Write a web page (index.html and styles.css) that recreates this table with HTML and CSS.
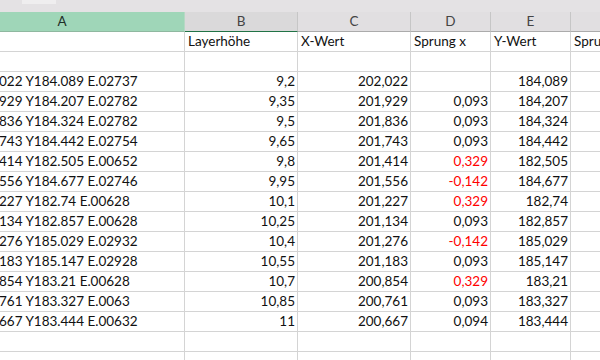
FILE: index.html
```html
<!DOCTYPE html>
<html lang="de">
<head>
    <meta charset="UTF-8">
    <title>Tabelle</title>
    <link rel="stylesheet" href="styles.css">
</head>
<body>
    <div class="sheet">
        <div class="topbar"><span class="topbar-patch"></span></div>

        <div class="row head">
            <div class="cell col-a sel">A</div>
            <div class="cell col-b near">B</div>
            <div class="cell col-c">C</div>
            <div class="cell col-d">D</div>
            <div class="cell col-e">E</div>
            <div class="cell col-f"></div>
        </div>

        <div class="row">
            <div class="cell col-a"></div>
            <div class="cell col-b">Layerhöhe</div>
            <div class="cell col-c">X-Wert</div>
            <div class="cell col-d">Sprung x</div>
            <div class="cell col-e">Y-Wert</div>
            <div class="cell col-f">Sprung y</div>
        </div>

        <div class="row">
            <div class="cell col-a"></div>
            <div class="cell col-b"></div>
            <div class="cell col-c"></div>
            <div class="cell col-d"></div>
            <div class="cell col-e"></div>
            <div class="cell col-f"></div>
        </div>

        <div id="rows"></div>

        <div class="row">
            <div class="cell col-a"></div>
            <div class="cell col-b"></div>
            <div class="cell col-c"></div>
            <div class="cell col-d"></div>
            <div class="cell col-e"></div>
            <div class="cell col-f"></div>
        </div>
        <div class="row">
            <div class="cell col-a"></div>
            <div class="cell col-b"></div>
            <div class="cell col-c"></div>
            <div class="cell col-d"></div>
            <div class="cell col-e"></div>
            <div class="cell col-f"></div>
        </div>
    </div>

    <script>
        // gcode fragment, Layerhöhe, X, Sprung x, Y, Sprung x rot?
        const data = [
            ['022 Y184.089 E.02737', '9,2', '202,022', '', '184,089', false],
            ['929 Y184.207 E.02782', '9,35', '201,929', '0,093', '184,207', false],
            ['836 Y184.324 E.02782', '9,5', '201,836', '0,093', '184,324', false],
            ['743 Y184.442 E.02754', '9,65', '201,743', '0,093', '184,442', false],
            ['414 Y182.505 E.00652', '9,8', '201,414', '0,329', '182,505', true],
            ['556 Y184.677 E.02746', '9,95', '201,556', '-0,142', '184,677', true],
            ['227 Y182.74 E.00628', '10,1', '201,227', '0,329', '182,74', true],
            ['134 Y182.857 E.00628', '10,25', '201,134', '0,093', '182,857', false],
            ['276 Y185.029 E.02932', '10,4', '201,276', '-0,142', '185,029', true],
            ['183 Y185.147 E.02928', '10,55', '201,183', '0,093', '185,147', false],
            ['854 Y183.21 E.00628', '10,7', '200,854', '0,329', '183,21', true],
            ['761 Y183.327 E.0063', '10,85', '200,761', '0,093', '183,327', false],
            ['667 Y183.444 E.00632', '11', '200,667', '0,094', '183,444', false]
        ];

        const rows = document.getElementById('rows');
        data.forEach(d => {
            const row = document.createElement('div');
            row.className = 'row';
            row.innerHTML = `
                <div class="cell col-a"><span class="clip">${d[0]}</span></div>
                <div class="cell col-b num">${d[1]}</div>
                <div class="cell col-c num">${d[2]}</div>
                <div class="cell col-d num${d[5] ? ' red' : ''}">${d[3]}</div>
                <div class="cell col-e num">${d[4]}</div>
                <div class="cell col-f"></div>
            `;
            rows.appendChild(row);
        });
    </script>
</body>
</html>
```

FILE: styles.css
```css
body {
    margin: 0;
    background: #fff;
    font-family: Lato, 'Open Sans', Arial, sans-serif;
    font-size: 13.5px;
    color: #111;
    overflow: hidden;
}
.sheet {
    width: 600px;
    height: 360px;
    overflow: hidden;
}
.topbar {
    height: 12px;
    background: #e4e2e4;
    position: relative;
}
.topbar-patch {
    position: absolute;
    left: 22px;
    top: 0;
    width: 34px;
    height: 4px;
    background: #efeeef;
}
.row {
    display: flex;
    height: 20px;
    margin-left: -60px;
}
.cell {
    flex: none;
    box-sizing: border-box;
    height: 20px;
    line-height: 19px;
    border-right: 1px solid #d4d4d4;
    border-bottom: 1px solid #d4d4d4;
    padding: 0 3px;
    white-space: nowrap;
    overflow: hidden;
}
.col-a { width: 245px; }
.col-b { width: 113px; }
.col-c { width: 113px; }
.col-d { width: 80px; }
.col-e { width: 80px; }
.col-f { width: 100px; }

.col-a .clip {
    display: inline-block;
    margin-left: 56px;
}
.num {
    text-align: right;
    padding-right: 2px;
}
.red { color: #ff0000; }

.head .cell {
    background: #e1dfe1;
    color: #444;
    text-align: center;
    border-right-color: #c6c6c6;
    border-bottom-color: #ababab;
}
.head .sel {
    background: #9fd6b8;
    color: #1f2f28;
    border-right-color: #b6d8c4;
    border-bottom-color: #8fb8a0;
}
.head .near {
    background: #dad9da;
    border-bottom-color: #217346;
}
```
